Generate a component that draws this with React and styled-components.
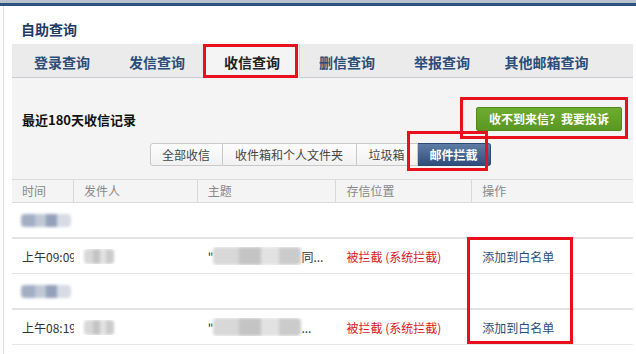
import React from "react";
import styled, { createGlobalStyle } from "styled-components";

const GlobalStyle = createGlobalStyle`
  body {
    margin: 0;
    background: #fff;
    font-family: "Noto Sans CJK SC", "Liberation Sans", sans-serif;
  }
`;

const tabs = ["登录查询", "发信查询", "收信查询", "删信查询", "举报查询", "其他邮箱查询"];
const filters = [
  { label: "全部收信", width: 73 },
  { label: "收件箱和个人文件夹", width: 134 },
  { label: "垃圾箱", width: 61 },
  { label: "邮件拦截", width: 73, active: true },
];
const columns = [
  { label: "时间", width: 62 },
  { label: "发件人", width: 124 },
  { label: "主题", width: 139 },
  { label: "存信位置", width: 136 },
  { label: "操作", width: 161 },
];
const rows = [
  { time: "上午09:09", tail: "同..." },
  { time: "上午08:19", tail: "..." },
];

function App() {
  return (
    <Page>
      <GlobalStyle />
      <TopStrip />
      <Frame>
        <Title>自助查询</Title>
        <TabBar>
          {tabs.map((t, i) => (
            <Tab key={t} $active={i === 2}>
              {t}
            </Tab>
          ))}
        </TabBar>
        <Content>
          <HeadRow>
            <Heading>最近180天收信记录</Heading>
            <GreenButton>收不到来信？我要投诉</GreenButton>
          </HeadRow>
          <FilterRow>
            <FilterGroup>
              {filters.map((f) => (
                <Filter key={f.label} $active={f.active} $width={f.width}>
                  {f.label}
                </Filter>
              ))}
            </FilterGroup>
          </FilterRow>
        </Content>
        <Table>
          <HeaderRow>
            {columns.map((c) => (
              <HeadCell key={c.label} $width={c.width}>
                {c.label}
              </HeadCell>
            ))}
          </HeaderRow>
          {rows.map((r) => (
            <React.Fragment key={r.time}>
              <GroupRow>
                <Blur $w={50} $h={13} $tone="blue" />
              </GroupRow>
              <DataRow>
                <Cell $width={62}>{r.time}</Cell>
                <Cell $width={124}>
                  <Blur $w={30} $h={15} />
                </Cell>
                <Cell $width={139}>
                  <Subject>
                    "<Blur $w={88} $h={18} />
                    {r.tail}
                  </Subject>
                </Cell>
                <Cell $width={136}>
                  <Blocked>被拦截 (系统拦截)</Blocked>
                </Cell>
                <Cell $width={161}>
                  <ActionLink>添加到白名单</ActionLink>
                </Cell>
              </DataRow>
            </React.Fragment>
          ))}
        </Table>
      </Frame>
      <Mark $x={203} $y={44} $w={95} $h={34} />
      <Mark $x={460} $y={97} $w={168} $h={42} />
      <Mark $x={407} $y={131} $w={81} $h={40} />
      <Mark $x={467} $y={237} $w={106} $h={107} />
    </Page>
  );
}

const Page = styled.div`
  position: relative;
  width: 636px;
  height: 354px;
  overflow: hidden;
  background: #fff;
`;

const TopStrip = styled.div`
  height: 3px;
  background: #b7c0cc;
  border-bottom: 3px solid #2e5282;
`;

const Frame = styled.div`
  margin-left: 3px;
  padding-left: 8px;
  padding-right: 3px;
  border-left: 1px solid #e2e2e2;
  height: 348px;
`;

const Title = styled.div`
  height: 38px;
  line-height: 46px;
  padding-left: 9px;
  font-size: 14px;
  font-weight: bold;
  color: #1d3b68;
`;

const TabBar = styled.div`
  display: flex;
  height: 33px;
  padding-left: 3px;
  background: #ebebeb;
  border-bottom: 1px solid #c9ccd3;
`;

const Tab = styled.div`
  width: 95px;
  height: ${(p) => (p.$active ? "34px" : "33px")};
  line-height: 36px;
  text-align: center;
  font-size: 14px;
  font-weight: bold;
  color: ${(p) => (p.$active ? "#222" : "#2b4d7a")};
  background: ${(p) => (p.$active ? "#f4f4f4" : "transparent")};
  border-right: 1px solid ${(p) => (p.$active ? "#d4d4d4" : "transparent")};
  box-sizing: border-box;
  &:last-child {
    width: 114px;
  }
`;

const Content = styled.div`
  background: #f4f4f4;
  padding: 29px 11px 13px 10px;
  border-bottom: 1px solid #dcdcdc;
`;

const HeadRow = styled.div`
  display: flex;
  align-items: center;
  justify-content: space-between;
  height: 24px;
`;

const Heading = styled.div`
  font-size: 13px;
  font-weight: bold;
  color: #111;
`;

const GreenButton = styled.div`
  width: 146px;
  height: 24px;
  box-sizing: border-box;
  line-height: 22px;
  text-align: center;
  color: #fff;
  font-size: 12px;
  font-weight: bold;
  background: linear-gradient(#6dac30, #5a9723);
  border: 1px solid #4f881d;
  border-radius: 2px;
`;

const FilterRow = styled.div`
  display: flex;
  justify-content: center;
  margin-top: 12px;
  padding-right: 4px;
`;

const FilterGroup = styled.div`
  display: flex;
`;

const Filter = styled.div`
  width: ${(p) => p.$width}px;
  height: 23px;
  box-sizing: border-box;
  line-height: 21px;
  text-align: center;
  font-size: 12px;
  color: ${(p) => (p.$active ? "#fff" : "#444")};
  font-weight: ${(p) => (p.$active ? "bold" : "normal")};
  background: ${(p) =>
    p.$active ? "linear-gradient(#5f7ca6, #2f4e7c)" : "linear-gradient(#fdfdfd, #f1f1f1)"};
  border: 1px solid ${(p) => (p.$active ? "#2d4a74" : "#c9c9c9")};
  border-left-width: 0;
  &:first-child {
    border-left-width: 1px;
    border-radius: 3px 0 0 3px;
  }
  &:last-child {
    border-radius: 0 3px 3px 0;
  }
`;

const Table = styled.div`
  font-size: 12px;
`;

const HeaderRow = styled.div`
  display: flex;
  height: 22px;
  background: #f4f4f4;
  border-bottom: 1px solid #dadada;
`;

const HeadCell = styled.div`
  width: ${(p) => p.$width}px;
  box-sizing: border-box;
  padding-left: 10px;
  line-height: 22px;
  color: #888;
  border-right: 1px solid #d8d8d8;
  &:last-child {
    border-right: none;
  }
`;

const GroupRow = styled.div`
  display: flex;
  align-items: center;
  height: 34px;
  padding-left: 9px;
  border-bottom: 2px solid #e2e4e6;
`;

const DataRow = styled.div`
  display: flex;
  align-items: center;
  height: 34px;
  border-bottom: 1px solid #e6e6e6;
`;

const Cell = styled.div`
  width: ${(p) => p.$width}px;
  box-sizing: border-box;
  padding-left: 10px;
  color: #333;
  white-space: nowrap;
  overflow: hidden;
  display: flex;
  align-items: center;
`;

const Subject = styled.span`
  display: inline-flex;
  align-items: center;
  color: #333;
`;

const Blur = styled.span`
  display: inline-block;
  width: ${(p) => p.$w}px;
  height: ${(p) => p.$h}px;
  border-radius: 4px;
  filter: blur(1.8px);
  background: ${(p) =>
    p.$tone === "blue"
      ? "linear-gradient(90deg, #a3aec5 0 28%, #c0c8d6 28% 50%, #94a0ba 50% 72%, #d6dbe4 72%)"
      : "linear-gradient(90deg, #d8d8d8 0 30%, #c4c4c4 30% 55%, #e2e2e2 55% 75%, #cbcbcb 75%)"};
`;

const Blocked = styled.span`
  color: #d9151c;
`;

const ActionLink = styled.span`
  color: #2b4d7a;
`;

const Mark = styled.div`
  position: absolute;
  left: ${(p) => p.$x}px;
  top: ${(p) => p.$y}px;
  width: ${(p) => p.$w}px;
  height: ${(p) => p.$h}px;
  box-sizing: border-box;
  border: 3px solid #e8101c;
  pointer-events: none;
`;

export default App;
